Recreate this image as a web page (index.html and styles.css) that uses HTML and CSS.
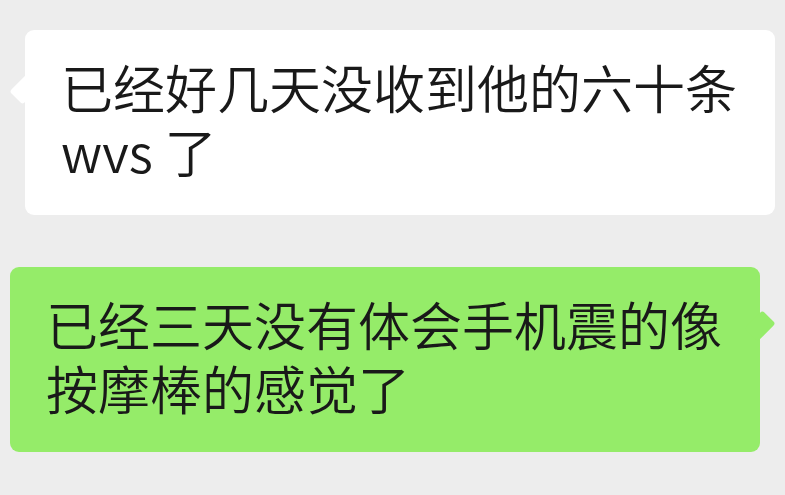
FILE: index.html
```html
<!DOCTYPE html>
<html lang="zh-CN">
<head>
  <meta charset="UTF-8" />
  <meta name="viewport" content="width=device-width, initial-scale=1" />
  <title>聊天</title>
  <link rel="stylesheet" href="styles.css">
</head>
<body>
  <div class="chat">
    <div class="bubble bubble-left">
      已经好几天没收到他的六十条<br>
      wvs 了
    </div>

    <div class="bubble bubble-right">
      已经三天没有体会手机震的像<br>
      按摩棒的感觉了
    </div>
  </div>
</body>
</html>
```

FILE: styles.css
```css
body {
  margin: 0;
  background-color: #ededed;
  font-family: "Noto Sans CJK SC", "Noto Sans", sans-serif;
}

.chat {
  display: flex;
  flex-direction: column;
  gap: 52px;
  padding-top: 30px;
}

.bubble {
  position: relative;
  box-sizing: border-box;
  width: 750px;
  padding: 25px 30px 32px 36px;
  border-radius: 9px;
  font-size: 52px;
  font-weight: 350;
  line-height: 64px;
  color: #191919;
  white-space: nowrap;
}

.bubble::before {
  content: "";
  position: absolute;
  top: 48px;
  width: 22px;
  height: 22px;
  border-radius: 3px;
  transform: rotate(45deg) scale(0.85, 1.15);
}

.bubble-left {
  margin-left: 25px;
  background-color: #fff;
}

.bubble-left::before {
  left: -11px;
  background-color: #fff;
}

.bubble-right {
  margin-left: 10px;
  background-color: #95ec69;
}

.bubble-right::before {
  right: -11px;
  background-color: #95ec69;
}
```
